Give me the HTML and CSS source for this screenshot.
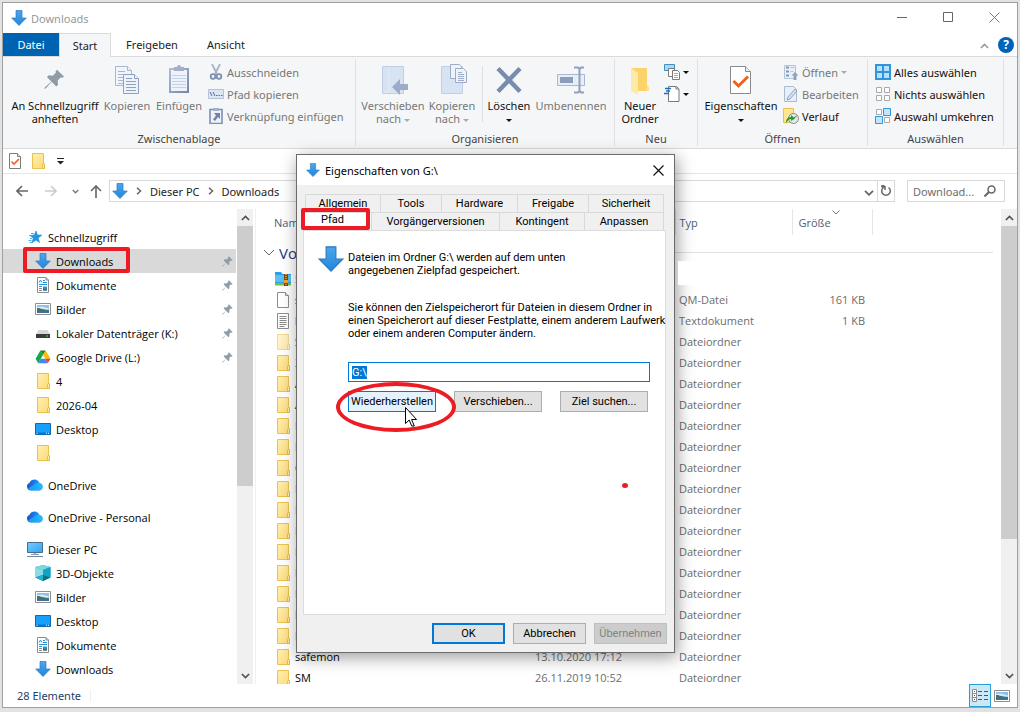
FILE: index.html
```html
<!DOCTYPE html>
<html lang="de">
<head>
    <meta charset="UTF-8">
    <meta name="viewport" content="width=device-width, initial-scale=1.0">
    <title>Downloads</title>
    <link rel="stylesheet" href="styles.css">
</head>
<body>
    <svg class="sprite" xmlns="http://www.w3.org/2000/svg">
        <defs>
            <linearGradient id="g-cloud" x1="0" y1="0" x2="1" y2="0"><stop offset="0" stop-color="#1a56c4"/><stop offset="0.5" stop-color="#1a7cf0"/><stop offset="1" stop-color="#28c4fa"/></linearGradient>
            <linearGradient id="g-folder" x1="0" y1="0" x2="1" y2="1"><stop offset="0" stop-color="#fff0b0"/><stop offset="1" stop-color="#fdd978"/></linearGradient>
            <linearGradient id="g-arrow" x1="0" y1="0" x2="0" y2="1"><stop offset="0" stop-color="#4ba6ee"/><stop offset="1" stop-color="#2186dd"/></linearGradient>
            <linearGradient id="g-clip" x1="0" y1="0" x2="1" y2="1"><stop offset="0" stop-color="#b0bdd4"/><stop offset="1" stop-color="#7286ac"/></linearGradient>
            <linearGradient id="g-screen" x1="0" y1="0" x2="1" y2="1"><stop offset="0" stop-color="#7ccbff"/><stop offset="1" stop-color="#2ba4f5"/></linearGradient>
        </defs>
        <symbol id="i-down" viewBox="0 0 16 16"><path d="M5 .5h6v7.500h4.300L8 15.500.7 8H5z" fill="url(#g-arrow)" stroke="#2b78bd" stroke-width=".7"/></symbol>
        <symbol id="i-folder" viewBox="0 0 16 16"><path d="M2.500.5h11v9.500l1 1v4.500h-12z" fill="url(#g-folder)" stroke="#e9c250"/><path d="M12.500 15.500v-4l1-1.500 1 1v4.500z" fill="#ffe9a0" stroke="#e0b53e" stroke-width=".8"/></symbol>
        <symbol id="i-page" viewBox="0 0 16 16"><path d="M2.500.5h8l3 3v12h-11z" fill="#fff" stroke="#8c8c8c"/><path d="M10.500.5v3h3" fill="#eee" stroke="#8c8c8c"/></symbol>
        <symbol id="i-text" viewBox="0 0 16 16"><path d="M2.500.5h11v15h-11z" fill="#fff" stroke="#8c8c8c"/><path d="M4.500 3.500h7M4.500 5.500h7M4.500 7.500h7M4.500 9.500h7M4.500 11.500h7M4.500 13.500h5" stroke="#8a8a8a"/></symbol>
        <symbol id="i-doc" viewBox="0 0 16 16"><path d="M2.500.5h8.500l2.500 2.500v12.500h-11z" fill="#fff" stroke="#8c8c8c"/><path d="M11 .5V3h2.500" fill="none" stroke="#8c8c8c"/><path d="M4 5.500L5.500 3 7 5.500M8 3.500h2M8 5.500h4M4 7.500h8M4 9.500h3" fill="none" stroke="#2793d8"/><path d="M4 11.500h3M4 13.500h3" stroke="#888"/><path d="M8 9.500h4v4H8z" fill="#3d8bc0"/><path d="M8 11.500l4 1v1H8z" fill="#3b6b50"/></symbol>
        <symbol id="i-picture" viewBox="0 0 16 16"><path d="M.5 2.500h15v11H.5z" fill="#fff" stroke="#8e8e8e"/><path d="M2 4h12v8H2z" fill="#8dbfea"/><path d="M2 6l5-.5 7 2v1H2z" fill="#d5ecf5"/><path d="M2 7c4 0 6 2 12 2v3H2z" fill="#456f76"/><path d="M2 11l12-1v2H2z" fill="#3f7298"/></symbol>
        <symbol id="i-drive" viewBox="0 0 16 16"><path d="M3.500 5h9L15 9.500H1z" fill="#d6d6d6"/><path d="M1 9h14v4H1z" fill="#393c3f"/><path d="M11 10.500h2v1h-2z" fill="#4fe04f"/></symbol>
        <symbol id="i-gdrive" viewBox="0 0 16 16"><path d="M5.400 1.500L8 6 3.200 14.200.6 9.800z" fill="#18a64b"/><path d="M5.400 1.500h5.200L8 6z" fill="#188038"/><path d="M10.600 1.500l4.900 8.300h-5.200L8 6z" fill="#fbbc04"/><path d="M5.700 9.800h4.600l2.500 4.400H3.200z" fill="#4285f4"/><path d="M10.300 9.800h5.200l-2.700 4.400z" fill="#ea4335"/></symbol>
        <symbol id="i-desktop" viewBox="0 0 16 16"><path d="M.5 2.500h15v11H.5z" fill="#17a0fb" stroke="#0f69ae"/><path d="M1 11.500h14v1.500H1z" fill="#0d74c7"/><path d="M1.500 12.300h1M11 12.300h1M13 12.300h1" stroke="#fff"/></symbol>
        <symbol id="i-cloud" viewBox="0 0 16 16"><path d="M4 13.500A4 4 0 0 1 2.500 5.800C3.500 3.500 5.300 2.500 7.500 2.500c2.500 0 4.300 1.500 5 3.500a3.800 3.800 0 0 1 0 7.500z" fill="url(#g-cloud)"/><path d="M4 13.500c-1.300 0-2.500-.8-3-2l8-5c1.400-.8 2.500-.7 3.500-.5a3.800 3.800 0 0 1 0 7.500z" fill="#22b8fa" opacity=".7"/></symbol>
        <symbol id="i-pc" viewBox="0 0 16 16"><path d="M.5 1.500h15v10H.5z" fill="url(#g-screen)" stroke="#4a6d88"/><path d="M6.500 12h3v1.500h-3z" fill="#a9b6c2"/><path d="M4 13.500h8" stroke="#879bad"/><path d="M0 15.500h16" stroke="#6d879b"/></symbol>
        <symbol id="i-cube" viewBox="0 0 16 16"><path d="M8 0l7.500 2v10.500L8 16 .5 12.500V2z" fill="#24b4cd"/><path d="M8 0l7.500 2L8 5 .5 2z" fill="#7fd6e2"/><path d="M.5 2L8 5v5L.5 12.500z" fill="#8adbe5"/><path d="M8 5l7.500-3v10.500L8 10z" fill="#12a3c4"/><path d="M8 10l7.500 2.500L8 16 .5 12.500z" fill="#086f87"/><path d="M8 10v6l-7.500-3.500z" fill="#1fb5ce"/></symbol>
        <symbol id="i-star" viewBox="0 0 16 16"><path d="M9 2l1.400 4 4.400.2-3.600 2.700 1.300 4.500L9 11l-4 2.700 1.300-4.600L3 6.500 7.500 6z" fill="#1d97e8" stroke="#1583d2" stroke-width=".6"/><path d="M4 4.500h3M2 6.500h2M3 9.500h2M1.500 11.500h3M2.500 13.500h3" stroke="#4baeee"/></symbol>
        <symbol id="i-pin" viewBox="0 0 16 16"><path d="M10 .5l5.500 5.500-1.700.8-1-.2-2.300 2.300.3 3.200-1.400 1.300-3.500-3.500-4.400 5-1.300.5.500-1.300 5-4.400L2.300 6.300l1.300-1.400 3.200.3 2.300-2.300-.2-1z" fill="#8f9ba5"/></symbol>
        <symbol id="i-zip" viewBox="0 0 16 16"><path d="M0 1h6l1.500 2H16v11H0z" fill="#2f9fe6"/><path d="M0 4h16v7H0z" fill="#58c0f5"/><path d="M0 12h16v2.500H0z" fill="#74c043"/><path d="M9 3h4v12H9z" fill="#7c451a"/><path d="M11 3v12" stroke="#f3b63a" stroke-width="1.500" stroke-dasharray="1 1"/><path d="M9 9h4v3H9z" fill="#f3a52a"/></symbol>
        <symbol id="i-check" viewBox="0 0 16 16"><path d="M2.500.5h8l3 3v12h-11z" fill="#fff" stroke="#7b7b7b"/><path d="M10.500.5v3h3" fill="#eee" stroke="#7b7b7b"/><path d="M4.500 8.500l2.500 2.500 5-5" fill="none" stroke="#f2601c" stroke-width="1.600"/></symbol>
        <symbol id="i-chev-d" viewBox="0 0 10 6"><path d="M1 .8l4 4 4-4" fill="none" stroke="currentColor" stroke-width="1.800"/></symbol>
        <symbol id="i-chev-u" viewBox="0 0 10 6"><path d="M1 5.200l4-4 4 4" fill="none" stroke="currentColor" stroke-width="1.800"/></symbol>
        <symbol id="i-chev-r" viewBox="0 0 6 8"><path d="M1 .8l3.500 3.200L1 7.200" fill="none" stroke="currentColor" stroke-width="1.500"/></symbol>
        <symbol id="i-caret" viewBox="0 0 6 3"><path d="M0 0h6L3 3z" fill="currentColor"/></symbol>
    </svg>

    <div class="window">
        <header class="titlebar">
            <svg class="icon"><use href="#i-down"/></svg>
            <span class="titlebar-text">Downloads</span>
            <div class="caption-buttons">
                <button aria-label="Minimieren"><svg width="11" height="11"><path d="M0 5.500h10" stroke="#666"/></svg></button>
                <button aria-label="Maximieren"><svg width="11" height="11"><path d="M.5.5h9v9h-9z" fill="none" stroke="#666"/></svg></button>
                <button aria-label="Schließen"><svg width="11" height="11"><path d="M.5.5l10 10M10.500.5l-10 10" stroke="#777"/></svg></button>
            </div>
        </header>

        <nav class="tabs">
            <button class="tab tab-file">Datei</button>
            <button class="tab tab-active">Start</button>
            <button class="tab">Freigeben</button>
            <button class="tab">Ansicht</button>
            <div class="tabs-right">
                <button aria-label="Menüband minimieren"><svg class="collapse"><use href="#i-chev-u"/></svg></button>
                <button class="help" aria-label="Hilfe">?</button>
            </div>
        </nav>

        <section class="ribbon">
            <div class="group group-clipboard">
                <div class="group-body">
                    <button class="big w-pin">
                        <svg viewBox="0 0 32 32"><g transform="translate(5 5) scale(1.300)"><use href="#i-pin" width="16" height="16"/></g></svg>
                        <span>An Schnellzugriff<br>anheften</span>
                    </button>
                    <button class="big w-copy" disabled>
                        <svg viewBox="0 0 32 32"><g fill="#f0f4fb" stroke="#a9b7cf"><path d="M4.500 2.500h12l4 4v15h-16z"/><path d="M16.500 2.500v4h4M7 7.500h7M7 10.500h5M7 13.500h5M7 16.500h5M7 19.500h5"/></g><g fill="#eef3fb" stroke="#8fa1bf"><path d="M12.500 10.500h11l4 4v15h-15z"/><path d="M23.500 10.500v4h4M15 14.500h6M15 17.500h10M15 20.500h10M15 23.500h10M15 26.500h10"/></g></svg>
                        <span>Kopieren</span>
                    </button>
                    <button class="big w-paste" disabled>
                        <svg viewBox="0 0 32 32"><path d="M6 4h20v25H6z" fill="url(#g-clip)"/><path d="M8 6h16v21H8z" fill="#eef3fb"/><path d="M9 11.500h14M9 14.500h14M9 17.500h14M9 20.500h14M9 23.500h14" stroke="#c5d2e6"/><path d="M11 3h3a2 2 0 0 1 4 0h3v4H11z" fill="#a4b0c8"/></svg>
                        <span>Einfügen</span>
                    </button>
                    <div class="smalls">
                        <button class="small" disabled><svg class="icon" viewBox="0 0 16 16"><path d="M4 0l5 10M12 0L7 10" stroke="#a7b3c9" stroke-width="1.800"/><circle cx="5" cy="12.500" r="2.300" fill="none" stroke="#7d8fb0" stroke-width="1.800"/><circle cx="11" cy="12.500" r="2.300" fill="none" stroke="#7d8fb0" stroke-width="1.800"/></svg>Ausschneiden</button>
                        <button class="small" disabled><svg class="icon" viewBox="0 0 16 16"><path d="M.5 3.500h15v9H.5z" fill="#dbe5f4" stroke="#b3c2da"/><path d="M2 6l2 4M5 6l2 4M8 9.500h1.500M10.500 9.500H12M13 9.500h1.500" stroke="#5b6f92"/></svg>Pfad kopieren</button>
                        <button class="small" disabled><svg class="icon" viewBox="0 0 16 16"><path d="M2 1.500h12v14H2z" fill="#eef3fb" stroke="#7c8fb3" stroke-width="1.600"/><path d="M5 0h6v3H5z" fill="#a4b0c8"/><path d="M6 5h6v6l-2-2-3 4-2-1.500 3-4z" fill="#6f84ab"/></svg>Verknüpfung einfügen</button>
                    </div>
                </div>
                <div class="group-label">Zwischenablage</div>
            </div>

            <div class="group group-organize">
                <div class="group-body">
                    <button class="big w-move" disabled>
                        <svg viewBox="0 0 32 32"><path d="M5.500 2.500h21v27h-21z" fill="#d7e2f2" stroke="#c0cfe4"/><path d="M8 29l4-2V5" fill="none" stroke="#e6eef8"/><path d="M15 23l8-8v5h8v6h-8v5z" fill="#9dacc6"/></svg>
                        <span>Verschieben<br>nach <svg class="caret"><use href="#i-caret"/></svg></span>
                    </button>
                    <button class="big w-copyto" disabled>
                        <svg viewBox="0 0 32 32"><path d="M5.500 2.500h21v27h-21z" fill="#d7e2f2" stroke="#c0cfe4"/><g fill="#eef3fb" stroke="#9dadc8"><path d="M14.500.5h9l2 2v12h-11z"/><path d="M19.500 4.500h8l3 3v11h-11z"/><path d="M22 8.500h4M22 10.500h6M22 12.500h6M22 14.500h6M22 16.500h6"/></g></svg>
                        <span>Kopieren<br>nach <svg class="caret"><use href="#i-caret"/></svg></span>
                    </button>
                    <div class="separator"></div>
                    <button class="big w-delete">
                        <svg viewBox="0 0 32 32"><path d="M5 4.500l22 23M27 4.500l-22 23" stroke="#7a8cae" stroke-width="4.500"/></svg>
                        <span>Löschen<br><svg class="caret"><use href="#i-caret"/></svg></span>
                    </button>
                    <button class="big w-rename" disabled>
                        <svg viewBox="0 0 32 32"><path d="M2.500 10.500h27v11h-27z" fill="#e8eef8" stroke="#a9b9d2"/><path d="M5 13h13v6H5z" fill="#8b9dbd"/><path d="M19 3.500h4l1.500 1.500 1.500-1.500h3M24.500 5v22M19 28.500h4l1.500-1.500 1.500 1.500h3" fill="none" stroke="#8f9fbc" stroke-width="2"/></svg>
                        <span>Umbenennen</span>
                    </button>
                </div>
                <div class="group-label">Organisieren</div>
            </div>

            <div class="group group-new">
                <div class="group-body">
                    <button class="big w-new">
                        <svg viewBox="0 0 32 32"><path d="M7 4h16v18l2 2v3H14z" fill="#fbd36a"/><path d="M7 4l7 5v22l-7-4z" fill="#ffe9a6"/><path d="M23 21l2 2v4h-3z" fill="#ffe08a"/></svg>
                        <span>Neuer<br>Ordner</span>
                    </button>
                    <div class="smalls">
                        <button class="small" aria-label="Neues Element"><svg class="icon" viewBox="0 0 16 16"><path d="M.5.5h10v6H.5z" fill="#a9d9f5" stroke="#3f8fc0"/><path d="M4.500 4.500h6v8h-6z" fill="#fff" stroke="#7b7b7b"/><path d="M8.500 6.500h5l2 2v7h-7z" fill="#fff" stroke="#7b7b7b"/><path d="M10 9.500h4M10 11.500h4M10 13.500h4" stroke="#7fb4e8"/></svg><svg class="caret"><use href="#i-caret"/></svg></button>
                        <button class="small" aria-label="Einfacher Zugriff"><svg class="icon" viewBox="0 0 16 16"><path d="M4.500.5h8l2.500 2.500v12.500H4.500z" fill="#fff" stroke="#7b7b7b"/><path d="M12 .5V3h3" fill="none" stroke="#7b7b7b"/><path d="M1 2.500h6M2 5h4M0 7.500h5" stroke="#1f6fb8" stroke-width="1.500"/></svg><svg class="caret"><use href="#i-caret"/></svg></button>
                    </div>
                </div>
                <div class="group-label">Neu</div>
            </div>

            <div class="group group-open">
                <div class="group-body">
                    <button class="big w-props">
                        <svg viewBox="0 0 32 32"><path d="M5.500 2.500h15l5 5v22h-20z" fill="#fff" stroke="#8b8b8b"/><path d="M20.500 2.500v5h5" fill="#eee" stroke="#8b8b8b"/><path d="M8.500 17l5 5L23 12.500" fill="none" stroke="#f2601c" stroke-width="3"/></svg>
                        <span>Eigenschaften<br><svg class="caret"><use href="#i-caret"/></svg></span>
                    </button>
                    <div class="smalls">
                        <button class="small" disabled><svg class="icon" viewBox="0 0 16 16"><path d="M1.500 1.500h11v13h-11z" fill="#e8eff9" stroke="#b6c4da"/><path d="M3 3.500h3M3 7.500h3M3 11.500h3" stroke="#8497ba" stroke-width="2"/><path d="M7.500 3.500h4M7.500 7.500h3" stroke="#b6c4da"/><path d="M12 8l3.500 3.500h-2V16h-3v-4.500h-2z" fill="#8fa1c0"/></svg>Öffnen <svg class="caret"><use href="#i-caret"/></svg></button>
                        <button class="small" disabled><svg class="icon" viewBox="0 0 16 16"><path d="M1.500.5h9l3 3v12h-12z" fill="#e8eff9" stroke="#a9b9d2"/><path d="M4 14l1-3 7-8 2 2-7 8z" fill="#d4dff0" stroke="#93a5c3"/></svg>Bearbeiten</button>
                        <button class="small"><svg class="icon" viewBox="0 0 16 16"><path d="M.5.5h10v14H.5z" fill="#fde68d" stroke="#e6c34f"/><circle cx="10.500" cy="10.500" r="5" fill="#e3e7ea" stroke="#84898d"/><path d="M10.500 10.500l3-2.500" stroke="#555"/><path d="M3 15c0-4 2-6 5-6V7l4 3.500-4 2.500v-2c-2 0-3 1.500-5 4z" fill="#21a321"/></svg>Verlauf</button>
                    </div>
                </div>
                <div class="group-label">Öffnen</div>
            </div>

            <div class="group group-select">
                <div class="group-body">
                    <div class="smalls">
                        <button class="small"><svg class="icon" viewBox="0 0 16 16"><path d="M0 0h16v16H0z" fill="#2f95dc"/><path d="M2 2h5v5H2zM9 2h5v5H9zM2 9h5v5H2zM9 9h5v5H9z" fill="#b9e0fb"/></svg>Alles auswählen</button>
                        <button class="small"><svg class="icon" viewBox="0 0 16 16"><path d="M1.500 1.500h5v5h-5zM9.500 1.500h5v5h-5zM1.500 9.500h5v5h-5zM9.500 9.500h5v5h-5z" fill="#fff" stroke="#a9a9a9"/></svg>Nichts auswählen</button>
                        <button class="small"><svg class="icon" viewBox="0 0 16 16"><path d="M1.500 1.500h5v5h-5zM9.500 9.500h5v5h-5z" fill="#fff" stroke="#a9a9a9"/><path d="M8.500.5h7v7h-7zM.5 8.500h7v7h-7z" fill="#c3e4fb" stroke="#2f95dc"/></svg>Auswahl umkehren</button>
                    </div>
                </div>
                <div class="group-label">Auswählen</div>
            </div>
        </section>

        <div class="quickbar">
            <button aria-label="Eigenschaften"><svg class="icon"><use href="#i-check"/></svg></button>
            <button aria-label="Neuer Ordner"><svg class="icon"><use href="#i-folder"/></svg></button>
            <button aria-label="Symbolleiste anpassen"><svg width="7" height="7"><path d="M0 .5h7" stroke="#222"/><path d="M0 3h7L3.500 6.500z" fill="#222"/></svg></button>
        </div>

        <div class="addressbar">
            <div class="history">
                <button aria-label="Zurück"><svg width="13" height="12"><path d="M6 1L1 6l5 5M1 6h11" fill="none" stroke="#666" stroke-width="1.600"/></svg></button>
                <button aria-label="Vorwärts"><svg width="13" height="12"><path d="M7 1l5 5-5 5M12 6H1" fill="none" stroke="#ccc" stroke-width="1.600"/></svg></button>
                <button aria-label="Zuletzt besucht"><svg width="7" height="5"><use href="#i-chev-d"/></svg></button>
                <button aria-label="Nach oben"><svg width="12" height="13"><path d="M1 6l5-5 5 5M6 1v12" fill="none" stroke="#666" stroke-width="1.600"/></svg></button>
            </div>
            <div class="crumbs">
                <svg class="icon"><use href="#i-down"/></svg>
                <svg class="crumb-sep"><use href="#i-chev-r"/></svg>
                <a href="#">Dieser PC</a>
                <svg class="crumb-sep"><use href="#i-chev-r"/></svg>
                <a href="#">Downloads</a>
                <button class="crumb-drop" aria-label="Vorherige Orte"><svg width="10" height="6"><use href="#i-chev-d"/></svg></button>
                <button class="refresh" aria-label="Aktualisieren"><svg width="12" height="12"><path d="M3.500 2.500a4.300 4.300 0 1 0 5 0M4.500.5H2v1.300h3V5" fill="none" stroke="#666" stroke-width="1.500"/></svg></button>
            </div>
            <label class="search">
                <input type="text" placeholder="Download..." aria-label="Downloads durchsuchen">
                <svg width="12" height="12"><circle cx="7.500" cy="4.500" r="3.500" fill="none" stroke="#666" stroke-width="1.500"/><path d="M5 7L.5 11.500" stroke="#666" stroke-width="2"/></svg>
            </label>
        </div>

        <div class="content">
            <nav class="sidebar">
                <a class="node root" href="#"><svg class="icon"><use href="#i-star"/></svg>Schnellzugriff</a>
                <a class="node selected" href="#"><svg class="icon"><use href="#i-down"/></svg>Downloads<svg class="pin"><use href="#i-pin"/></svg></a>
                <a class="node" href="#"><svg class="icon"><use href="#i-doc"/></svg>Dokumente<svg class="pin"><use href="#i-pin"/></svg></a>
                <a class="node" href="#"><svg class="icon"><use href="#i-picture"/></svg>Bilder<svg class="pin"><use href="#i-pin"/></svg></a>
                <a class="node" href="#"><svg class="icon"><use href="#i-drive"/></svg>Lokaler Datenträger (K:)<svg class="pin"><use href="#i-pin"/></svg></a>
                <a class="node" href="#"><svg class="icon"><use href="#i-gdrive"/></svg>Google Drive (L:)<svg class="pin"><use href="#i-pin"/></svg></a>
                <a class="node" href="#"><svg class="icon"><use href="#i-folder"/></svg>4</a>
                <a class="node" href="#"><svg class="icon"><use href="#i-folder"/></svg>2026-04</a>
                <a class="node" href="#"><svg class="icon"><use href="#i-desktop"/></svg>Desktop</a>
                <a class="node" href="#" aria-label="Ordner"><svg class="icon"><use href="#i-folder"/></svg></a>
                <a class="node root spaced" href="#"><svg class="icon"><use href="#i-cloud"/></svg>OneDrive</a>
                <a class="node root spaced" href="#"><svg class="icon"><use href="#i-cloud"/></svg>OneDrive - Personal</a>
                <a class="node root spaced" href="#"><svg class="icon"><use href="#i-pc"/></svg>Dieser PC</a>
                <a class="node" href="#"><svg class="icon"><use href="#i-cube"/></svg>3D-Objekte</a>
                <a class="node" href="#"><svg class="icon"><use href="#i-picture"/></svg>Bilder</a>
                <a class="node" href="#"><svg class="icon"><use href="#i-desktop"/></svg>Desktop</a>
                <a class="node" href="#"><svg class="icon"><use href="#i-doc"/></svg>Dokumente</a>
                <a class="node" href="#"><svg class="icon"><use href="#i-down"/></svg>Downloads</a>
            </nav>
            <div class="scrollbar">
                <svg class="scroll-arrow"><use href="#i-chev-u"/></svg>
                <div class="track"><div class="thumb thumb-tree"></div></div>
                <svg class="scroll-arrow"><use href="#i-chev-d"/></svg>
            </div>

            <main class="files">
                <table>
                    <colgroup>
                        <col class="col-name"><col class="col-date"><col class="col-type"><col class="col-size"><col>
                    </colgroup>
                    <thead>
                        <tr><th>Name</th><th></th><th>Typ</th><th><svg class="sort" width="8" height="5"><path d="M.5.5L4 4 7.500.5" fill="none" stroke="#777"/></svg>Größe</th><th></th></tr>
                    </thead>
                    <tbody>
                        <tr class="group-row"><th colspan="5"><div><svg width="12" height="7"><path d="M1 1l5 5 5-5" fill="none" stroke="#666"/></svg>Vor<hr></div></th></tr>
                        <tr><td><svg class="icon"><use href="#i-zip"/></svg>5</td><td></td><td></td><td></td><td></td></tr>
                        <tr><td><svg class="icon"><use href="#i-page"/></svg>s</td><td></td><td>QM-Datei</td><td>161 KB</td><td></td></tr>
                        <tr><td><svg class="icon"><use href="#i-text"/></svg>l</td><td></td><td>Textdokument</td><td>1 KB</td><td></td></tr>
                        <tr><td><svg class="icon faded"><use href="#i-folder"/></svg>S</td><td></td><td>Dateiordner</td><td></td><td></td></tr>
                        <tr><td><svg class="icon"><use href="#i-folder"/></svg>3</td><td></td><td>Dateiordner</td><td></td><td></td></tr>
                        <tr><td><svg class="icon"><use href="#i-folder"/></svg>A</td><td></td><td>Dateiordner</td><td></td><td></td></tr>
                        <tr><td><svg class="icon"><use href="#i-folder"/></svg>A</td><td></td><td>Dateiordner</td><td></td><td></td></tr>
                        <tr><td><svg class="icon"><use href="#i-folder"/></svg>D</td><td></td><td>Dateiordner</td><td></td><td></td></tr>
                        <tr><td><svg class="icon"><use href="#i-folder"/></svg>D</td><td></td><td>Dateiordner</td><td></td><td></td></tr>
                        <tr><td><svg class="icon"><use href="#i-folder"/></svg>C</td><td></td><td>Dateiordner</td><td></td><td></td></tr>
                        <tr><td><svg class="icon"><use href="#i-folder"/></svg>D</td><td></td><td>Dateiordner</td><td></td><td></td></tr>
                        <tr><td><svg class="icon"><use href="#i-folder"/></svg>F</td><td></td><td>Dateiordner</td><td></td><td></td></tr>
                        <tr><td><svg class="icon"><use href="#i-folder"/></svg>H</td><td></td><td>Dateiordner</td><td></td><td></td></tr>
                        <tr><td><svg class="icon"><use href="#i-folder"/></svg>I</td><td></td><td>Dateiordner</td><td></td><td></td></tr>
                        <tr><td><svg class="icon"><use href="#i-folder"/></svg>K</td><td></td><td>Dateiordner</td><td></td><td></td></tr>
                        <tr><td><svg class="icon"><use href="#i-folder"/></svg>L</td><td></td><td>Dateiordner</td><td></td><td></td></tr>
                        <tr><td><svg class="icon"><use href="#i-folder"/></svg>N</td><td></td><td>Dateiordner</td><td></td><td></td></tr>
                        <tr><td><svg class="icon"><use href="#i-folder"/></svg>P</td><td></td><td>Dateiordner</td><td></td><td></td></tr>
                        <tr><td><svg class="icon"><use href="#i-folder"/></svg>safemon</td><td>13.10.2020 17:12</td><td>Dateiordner</td><td></td><td></td></tr>
                        <tr><td><svg class="icon"><use href="#i-folder"/></svg>SM</td><td>26.11.2019 10:52</td><td>Dateiordner</td><td></td><td></td></tr>
                    </tbody>
                </table>
            </main>
            <div class="scrollbar">
                <svg class="scroll-arrow"><use href="#i-chev-u"/></svg>
                <div class="track"><div class="thumb thumb-list"></div></div>
                <svg class="scroll-arrow"><use href="#i-chev-d"/></svg>
            </div>
        </div>

        <footer class="statusbar">
            <span class="count">28 Elemente</span>
            <div class="views">
                <button class="view view-active" aria-label="Details"><svg width="16" height="14"><path d="M.5.5h4v12h-4zM.5 4.500h4M.5 8.500h4" fill="#fff" stroke="#8c8c8c"/><path d="M2 2.500h1M2 6.500h1M2 10.500h1M6 2.500h4M6 6.500h4M6 10.500h4M12 2.500h4M12 6.500h4M12 10.500h4" stroke="#555"/></svg></button>
                <button class="view" aria-label="Große Symbole"><svg class="icon"><use href="#i-picture"/></svg></button>
            </div>
        </footer>
    </div>

    <div class="dialog" role="dialog" aria-label="Eigenschaften von G:\">
        <div class="dialog-title">
            <svg class="icon"><use href="#i-down"/></svg>
            <span>Eigenschaften von G:\</span>
            <button aria-label="Schließen"><svg width="11" height="11"><path d="M.5.5l10 10M10.500.5l-10 10" stroke="#111" stroke-width="1.200"/></svg></button>
        </div>
        <div class="sheet">
            <div class="sheet-tabs row-back">
                <button>Allgemein</button><button>Tools</button><button>Hardware</button><button>Freigabe</button><button>Sicherheit</button>
            </div>
            <div class="sheet-tabs row-front">
                <button class="current">Pfad</button><button>Vorgängerversionen</button><button>Kontingent</button><button>Anpassen</button>
            </div>
            <div class="pane">
                <svg class="pane-icon"><use href="#i-down"/></svg>
                <div class="pane-body">
                    <p>Dateien im Ordner G:\ werden auf dem unten<br>angegebenen Zielpfad gespeichert.</p>
                    <p>Sie können den Zielspeicherort für Dateien in diesem Ordner in<br>einen Speicherort auf dieser Festplatte, einem anderem Laufwerk<br>oder einem anderen Computer ändern.</p>
                    <input type="text" id="target-path" value="G:\" aria-label="Zielpfad">
                    <div class="path-buttons">
                        <button class="btn hot">Wiederherstellen</button>
                        <button class="btn">Verschieben...</button>
                        <button class="btn">Ziel suchen...</button>
                    </div>
                </div>
            </div>
        </div>
        <div class="dialog-buttons">
            <button class="btn default">OK</button>
            <button class="btn">Abbrechen</button>
            <button class="btn" disabled>Übernehmen</button>
        </div>
    </div>

    <!-- Markierungen über den Fenstern -->
    <div class="blank"></div>
    <div class="mark mark-tree"></div>
    <div class="mark mark-tab"></div>
    <div class="mark mark-restore"></div>
    <div class="dot"></div>
    <svg class="cursor" width="13" height="21"><path d="M.5.500v16l3.700-3.500 2.500 6h2.600l-2.700-6.500h5z" fill="#fff" stroke="#000"/></svg>

    <script>
        // Pfad im Eingabefeld auswählen
        document.getElementById('target-path').select();
    </script>
</body>
</html>
```
FILE: styles.css
```css
:root {
    --ui-font: "Open Sans", "Noto Sans", sans-serif;
    --ribbon-font: "Noto Sans", "Open Sans", sans-serif;
    --dialog-font: Roboto, "Liberation Sans", Arial, sans-serif;
    --line: #dadbdc;
    --ribbon: #f5f6f7;
    --accent: #0078d7;
    --mark: #ed1c24;
}

* {
    box-sizing: border-box;
}

body {
    margin: 0;
    padding: 2px 2px 4px;
    height: 100vh;
    display: flex;
    overflow: hidden;
    position: relative;
    background: #e2e2e2;
    font-family: var(--ui-font);
    font-size: 11px;
    color: #111;
}

button {
    border: none;
    background: none;
    padding: 0;
    font: inherit;
    color: inherit;
}

a {
    color: inherit;
    text-decoration: none;
}

svg {
    flex: none;
}

.sprite {
    position: absolute;
    width: 0;
    height: 0;
}

.icon {
    width: 16px;
    height: 16px;
}

.window {
    flex: 1;
    min-width: 0;
    display: flex;
    flex-direction: column;
    background: #fff;
    border: 1px solid #a0a0a0;
}

/* Titelleiste */
.titlebar {
    height: 30px;
    flex: none;
    display: flex;
    align-items: center;
    gap: 4px;
    padding-left: 8px;
    font-family: var(--ribbon-font);
    color: #999;
}

.caption-buttons {
    margin-left: auto;
    display: flex;
}

.caption-buttons button {
    width: 46px;
    height: 28px;
}

/* Register */
.tabs {
    height: 24px;
    flex: none;
    display: flex;
    border-bottom: 1px solid var(--line);
    font-family: var(--ribbon-font);
    color: #222;
}

.tab {
    width: 82px;
    height: 23px;
}

.tab:nth-child(4) {
    width: 66px;
}

.tab.tab-file {
    width: 56px;
    background: #0063b1;
    color: #fff;
}

.tab.tab-active {
    width: 52px;
    height: 24px;
    background: var(--ribbon);
    border: 1px solid var(--line);
    border-bottom: none;
}

.tabs-right {
    margin-left: auto;
    display: flex;
    align-items: center;
    gap: 9px;
    padding-right: 3px;
}

.collapse {
    width: 9px;
    height: 6px;
    color: #999;
}

.help {
    width: 16px;
    height: 16px;
    border-radius: 50%;
    background: #0063b9;
    color: #fff;
    font-size: 12px;
    font-weight: bold;
    line-height: 16px;
}

/* Menüband */
.ribbon {
    flex: none;
    display: flex;
    height: 92px;
    padding: 2px 0;
    background: var(--ribbon);
    border-bottom: 1px solid var(--line);
    font-family: var(--ribbon-font);
}

.group {
    display: flex;
    flex-direction: column;
    border-right: 1px solid #e0e1e3;
}

.group-clipboard {
    width: 353px;
}

.group-organize {
    width: 259px;
}

.group-new {
    width: 83px;
}

.group-open {
    width: 170px;
}

.group-select {
    width: 136px;
}

.group-body {
    display: flex;
    flex: 1;
    padding-left: 4px;
}

.group-clipboard .group-body {
    padding-left: 6px;
}

.group-select .group-body {
    padding-left: 7px;
}

.group-label {
    text-align: center;
    line-height: 14px;
    color: #444;
}

.big {
    display: flex;
    flex-direction: column;
    align-items: center;
    gap: 3px;
    padding-top: 5px;
    line-height: 13px;
    white-space: nowrap;
}

.big > svg {
    width: 32px;
    height: 32px;
}

.big:disabled,
.small:disabled {
    color: #777;
}

.w-pin {
    width: 92px;
}

.w-copy {
    width: 52px;
}

.w-paste {
    width: 52px;
}

.w-move {
    width: 66px;
}

.w-copyto,
.w-delete {
    width: 52px;
}

.w-rename {
    width: 72px;
}

.w-new {
    width: 42px;
}

.w-props {
    width: 78px;
}

.separator {
    width: 1px;
    margin: 7px 0 10px 4px;
    background: #e0e1e3;
}

.smalls {
    display: flex;
    flex-direction: column;
    padding: 2px 0 0 3px;
}

.small {
    height: 22px;
    display: flex;
    align-items: center;
    gap: 3px;
    white-space: nowrap;
}

.group-select .smalls {
    padding-left: 0;
}

.caret {
    width: 6px;
    height: 3px;
    vertical-align: middle;
}

:disabled .caret {
    color: #aaa;
}

/* Schnellzugriffsleiste */
.quickbar {
    height: 25px;
    flex: none;
    display: flex;
    align-items: center;
    gap: 7px;
    padding-left: 4px;
    border-bottom: 1px solid #e5e5e5;
}

.quickbar button {
    display: flex;
    align-items: center;
    height: 24px;
}

.quickbar button:last-child {
    margin-left: 4px;
}

/* Adressleiste */
.addressbar {
    flex: none;
    display: flex;
    padding: 6px 12px 7px 13px;
    font-family: var(--ribbon-font);
}

.history {
    width: 93px;
    display: flex;
    align-items: center;
    gap: 15px;
    color: #777;
}

.history button {
    display: flex;
}

.history button:last-child {
    margin-left: -4px;
}

.crumbs {
    flex: 1;
    display: flex;
    align-items: center;
    height: 22px;
    border: 1px solid #d9d9d9;
    padding-left: 2px;
    color: #222;
}

.crumb-sep {
    width: 6px;
    height: 8px;
    margin: 0 8px;
    color: #666;
}

.crumb-drop {
    margin-left: auto;
    width: 16px;
    color: #666;
}

.refresh {
    width: 17px;
    align-self: stretch;
    border-left: 1px solid #d9d9d9;
    display: flex;
    align-items: center;
    justify-content: center;
}

.search {
    width: 98px;
    height: 22px;
    margin-left: 12px;
    display: flex;
    align-items: center;
    border: 1px solid #d9d9d9;
    padding: 0 8px 0 5px;
}

.search input {
    flex: 1;
    min-width: 0;
    border: none;
    padding: 0;
    outline: none;
    font: inherit;
}

.search input::placeholder {
    color: #6d6d6d;
}

/* Inhalt */
.content {
    flex: 1;
    min-height: 0;
    display: flex;
    overflow: hidden;
}

.sidebar {
    width: 234px;
    flex: none;
    padding-top: 16px;
    overflow: hidden;
    color: #000;
}

.node {
    height: 24px;
    display: flex;
    align-items: center;
    gap: 5px;
    padding: 0 3px 0 32px;
    margin-right: 1px;
}

.node.root {
    padding-left: 24px;
}

.node.spaced {
    margin-top: 8px;
}

.node.selected {
    background: #d9d9d9;
}

.pin {
    width: 11px;
    height: 11px;
    margin-left: auto;
}

.scrollbar {
    width: 16px;
    flex: none;
    display: flex;
    flex-direction: column;
    align-items: center;
    background: #f0f0f0;
    color: #505050;
}

.scroll-arrow {
    width: 9px;
    height: 6px;
    margin: 6px 0 5px;
}

.track {
    flex: 1;
    width: 100%;
}

.thumb {
    background: #cdcdcd;
}

.thumb-tree {
    height: 59%;
}

.thumb-list {
    height: 71%;
}

.files {
    flex: 1;
    min-width: 0;
    margin-left: 2px;
    padding: 0 8px 0 7px;
    border-left: 1px solid #f0f0f0;
    overflow: hidden;
}

.files table {
    width: 100%;
    table-layout: fixed;
    border-collapse: collapse;
}

.col-name {
    width: 268px;
}

.col-date {
    width: 144px;
}

.col-type {
    width: 117px;
}

.col-size {
    width: 80px;
}

.files th {
    position: relative;
    height: 26px;
    padding: 0 4px;
    text-align: left;
    font-weight: normal;
    color: #4c607a;
    border-right: 1px solid #e5e5e5;
}

.files thead th:first-child {
    padding-left: 11px;
}

.files thead th:nth-child(4) {
    padding-left: 6px;
}

.files th:last-child {
    border-right: none;
}

.sort {
    position: absolute;
    top: 1px;
    left: 50%;
}

.files .group-row th {
    height: 33px;
    padding: 2px 0 0;
    font-size: 15px;
    color: #1e3287;
}

.group-row div {
    display: flex;
    align-items: center;
    gap: 4px;
}

.group-row hr {
    flex: 1;
    margin: 0;
    border: none;
    border-top: 1px solid #e0e0e0;
}

.files td {
    height: 21px;
    padding: 0 4px;
    line-height: 16px;
    color: #6d6d6d;
    white-space: nowrap;
    overflow: hidden;
}

.files td:first-child {
    padding-left: 12px;
    color: #000;
}

.files td:nth-child(4) {
    padding-right: 7px;
    text-align: right;
}

.files td .icon {
    margin-right: 4px;
    vertical-align: top;
}

.icon.faded {
    opacity: 0.6;
}

/* Statusleiste */
.statusbar {
    height: 23px;
    flex: none;
    display: flex;
    align-items: center;
    padding-left: 14px;
    font-family: var(--ribbon-font);
    color: #26406b;
}

.count {
    padding-right: 9px;
    border-right: 1px solid #eee;
    line-height: 12px;
}

.views {
    margin-left: auto;
    display: flex;
    padding-right: 4px;
}

.view {
    width: 22px;
    height: 23px;
    display: flex;
    align-items: center;
    justify-content: center;
}

.view-active {
    background: #cce8f6;
    border: 1px solid #26a0da;
}

/* Eigenschaftendialog */
.dialog {
    position: absolute;
    left: 296px;
    top: 154px;
    width: 379px;
    background: #f0f0f0;
    border: 1px solid #6b6b6b;
    box-shadow: 2px 4px 16px rgba(0, 0, 0, 0.4);
    font-family: var(--dialog-font);
    font-size: 11px;
    color: #000;
}

.dialog-title {
    height: 30px;
    display: flex;
    align-items: center;
    gap: 4px;
    padding: 0 10px 0 8px;
    background: #fff;
    font-family: var(--ribbon-font);
}

.dialog-title .icon {
    height: 14px;
}

.dialog-title button {
    margin-left: auto;
    display: flex;
}

.sheet {
    padding: 9px 8px 0 6px;
}

.sheet-tabs {
    display: flex;
    padding: 0 2px;
}

.sheet-tabs button {
    height: 18px;
    border: 1px solid #d9d9d9;
    border-bottom: none;
    border-left: none;
}

.row-back button:first-child {
    border-left: 1px solid #d9d9d9;
    width: 76px;
}

.row-back button:nth-child(2) {
    width: 61px;
}

.row-back button:nth-child(3) {
    width: 76px;
}

.row-back button:nth-child(4) {
    width: 71px;
}

.row-back button:nth-child(5) {
    flex: 1;
}

.row-front {
    padding-left: 0;
}

.row-front button.current {
    width: 69px;
    background: #fff;
    padding: 0 9px 4px 0;
}

.row-front button:nth-child(2) {
    width: 128px;
}

.row-front button:nth-child(3) {
    width: 85px;
}

.row-front button:nth-child(4) {
    flex: 1;
}

.pane {
    display: flex;
    min-height: 385px;
    padding: 15px 14px;
    background: #fff;
    border: 1px solid #dcdcdc;
}

.pane-icon {
    width: 26px;
    height: 26px;
}

.pane-body {
    flex: 1;
    padding: 5px 0 0 4px;
}

.pane p {
    margin: 0 0 24px;
    line-height: 13px;
    white-space: nowrap;
}

.pane p + p {
    margin-bottom: 22px;
}

.pane input {
    display: block;
    width: 302px;
    height: 20px;
    margin-bottom: 9px;
    padding: 0 3px;
    border: 1px solid var(--accent);
    outline: none;
    font: inherit;
}

.pane input::selection {
    background: var(--accent);
    color: #fff;
}

.path-buttons {
    display: flex;
    justify-content: space-between;
    width: 300px;
}

.btn {
    width: 88px;
    height: 21px;
    background: #e1e1e1;
    border: 1px solid #adadad;
    white-space: nowrap;
}

.btn.hot {
    background: #e5f1fb;
    border-color: var(--accent);
}

.dialog-buttons {
    display: flex;
    justify-content: flex-end;
    gap: 8px;
    padding: 8px 7px;
}

.dialog-buttons .btn {
    width: 73px;
}

.btn.default {
    border: 2px solid var(--accent);
}

.btn:disabled {
    background: #ccc;
    border-color: #bfbfbf;
    color: #838383;
}

/* Markierungen */
.mark {
    position: absolute;
    border: 4px solid var(--mark);
    border-radius: 2px;
    pointer-events: none;
}

.mark-tree {
    left: 23px;
    top: 247px;
    width: 107px;
    height: 26px;
}

.mark-tab {
    left: 301px;
    top: 208px;
    width: 69px;
    height: 22px;
}

.mark-restore {
    left: 336px;
    top: 382px;
    width: 120px;
    height: 50px;
    border-radius: 50%;
}

.dot {
    position: absolute;
    left: 622px;
    top: 483px;
    width: 6px;
    height: 5px;
    border-radius: 50%;
    background: var(--mark);
}

.cursor {
    position: absolute;
    left: 405px;
    top: 407px;
}

.blank {
    position: absolute;
    left: 678px;
    top: 261px;
    width: 40px;
    height: 24px;
    background: #fff;
}
```
